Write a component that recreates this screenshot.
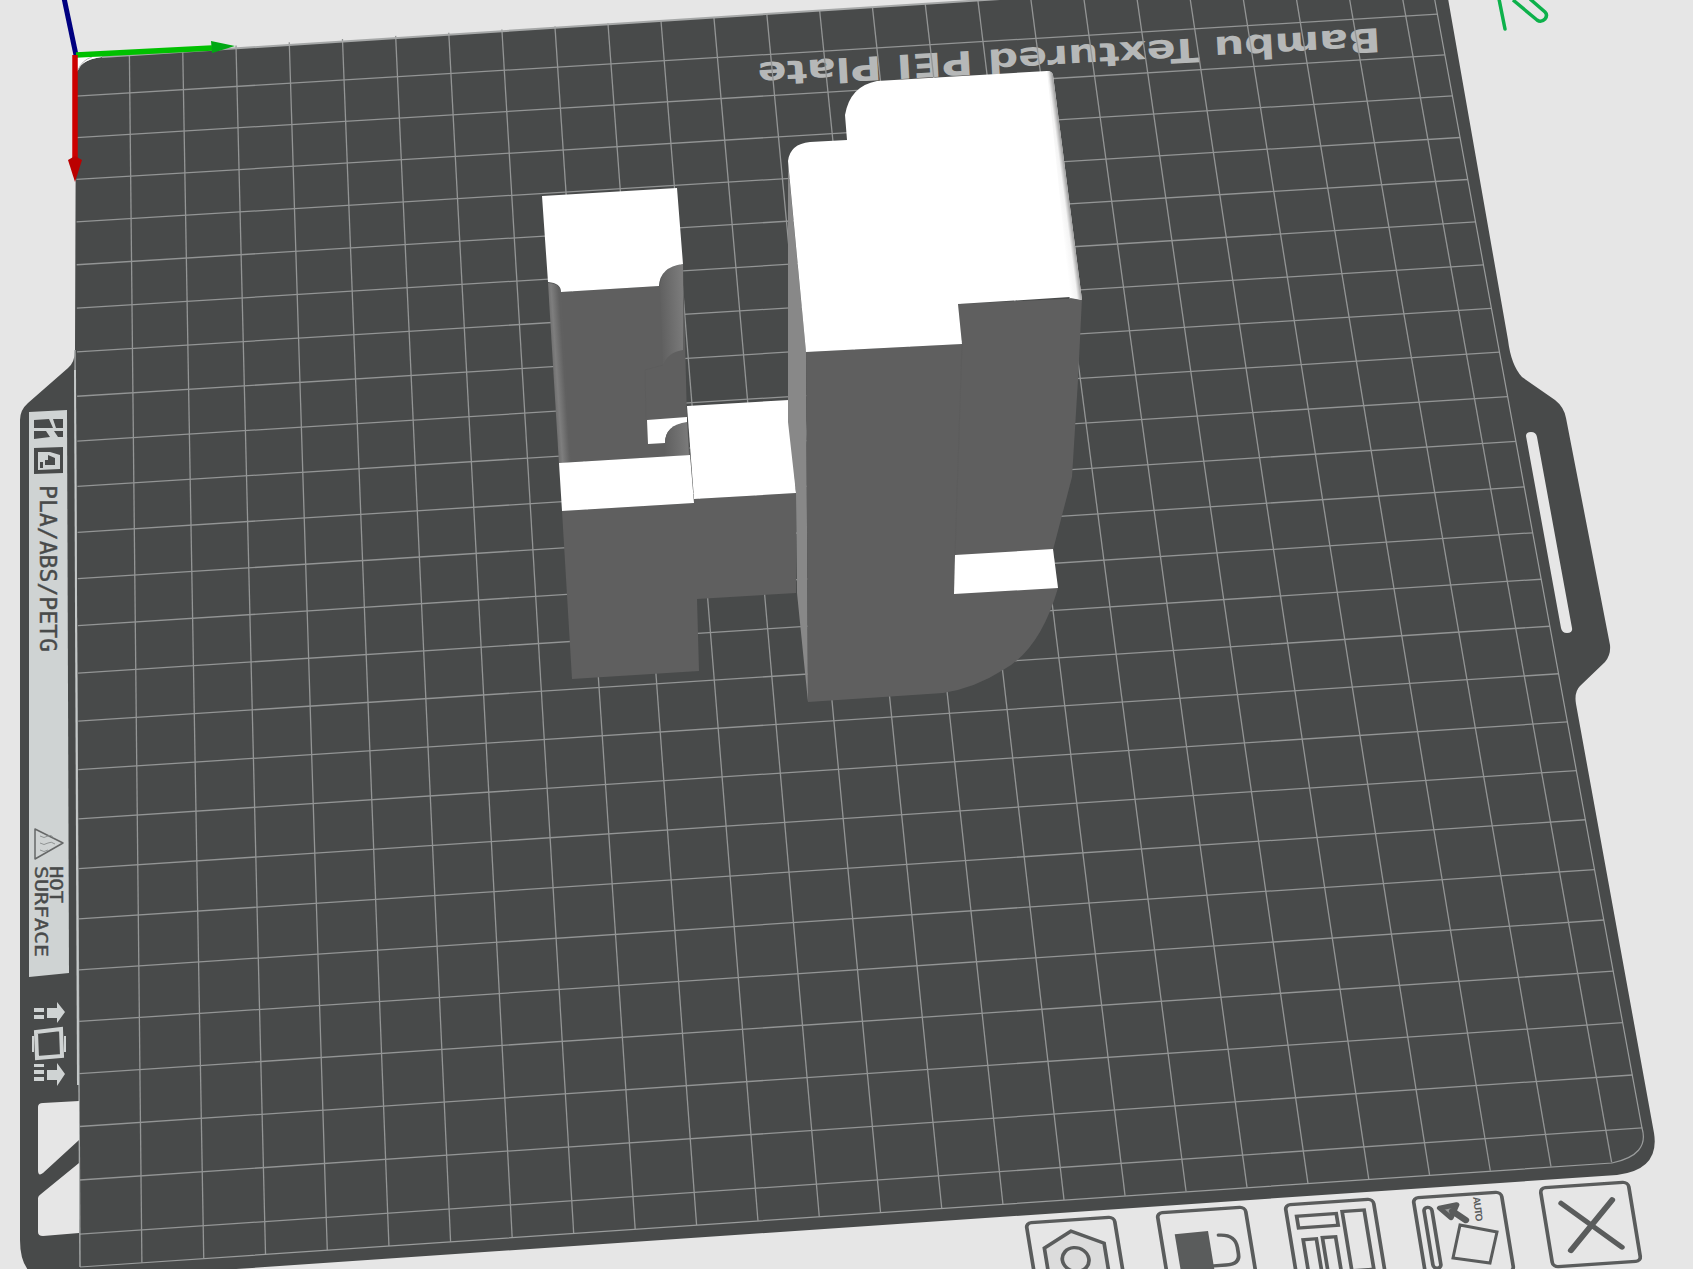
const BG = "#e6e6e6";
const PLATE = "#484a4a";
const LABEL = "#cfd3d3";
const ICON = "#5a5c5c";
const BODY = "#5f5f5f";
const SIDE = "#888888";

type Pt = [number, number];

// grid corners on screen, plate is 256mm and the grid runs every 10mm
const corners: Pt[] = [
  [76, 55],
  [1430, -26],
  [1648, 1160],
  [80, 1267],
];

function makeProjection([p0, p1, p2, p3]: Pt[]) {
  const dx1 = p1[0] - p2[0];
  const dx2 = p3[0] - p2[0];
  const sx = p0[0] - p1[0] + p2[0] - p3[0];
  const dy1 = p1[1] - p2[1];
  const dy2 = p3[1] - p2[1];
  const sy = p0[1] - p1[1] + p2[1] - p3[1];
  const det = dx1 * dy2 - dx2 * dy1;
  const g = (sx * dy2 - dx2 * sy) / det;
  const h = (dx1 * sy - sx * dy1) / det;
  const a = p1[0] - p0[0] + g * p1[0];
  const b = p3[0] - p0[0] + h * p3[0];
  const d = p1[1] - p0[1] + g * p1[1];
  const e = p3[1] - p0[1] + h * p3[1];
  return (u: number, v: number): Pt => {
    const w = g * u + h * v + 1;
    return [(a * u + b * v + p0[0]) / w, (d * u + e * v + p0[1]) / w];
  };
}

function GridLines() {
  const project = makeProjection(corners);
  const steps = Array.from({ length: 25 }, (_, i) => ((i + 1) * 10) / 256);
  return (
    <g stroke="#939595" strokeWidth="1.3">
      {steps.map((t) => {
        const a = project(t, 0);
        const b = project(t, 1);
        const c = project(0, t);
        const d = project(1, t);
        return (
          <g key={t}>
            <line x1={a[0]} y1={a[1]} x2={b[0]} y2={b[1]} />
            <line x1={c[0]} y1={c[1]} x2={d[0]} y2={d[1]} />
          </g>
        );
      })}
    </g>
  );
}

function Plate() {
  return (
    <g>
      <path
        d="M76 75 Q78 60 102 57 L1000 -1 L1443 -30 L1508 340 Q1511 365 1522 377 L1555 400 Q1564 407 1566 418 L1610 645 Q1611 655 1605 662 L1580 686 Q1574 692 1576 704 L1654 1133 Q1660 1170 1617 1175 L60 1281 Q20 1284 20 1240 L20 420 Q20 410 28 403 L68 368 Q75 362 75 350 Z"
        fill={PLATE}
      />
      <path d="M76 76 Q78 60 102 57 L76 57 Z" fill="#ffffff" />
      <path d="M78 70 Q82 60 92 57" fill="none" stroke="#b5b5b5" />
      <text
        transform="translate(1380 28) rotate(176.8)"
        x="0"
        y="0"
        fontFamily="'DejaVu Sans', sans-serif"
        fontSize="33"
        fontWeight="700"
        textLength="624"
        lengthAdjust="spacingAndGlyphs"
        fill="#b6b8b8"
      >
        Bambu Textured PEI Plate
      </text>
      <GridLines />
      {/* top edge, right border with its round corner, bottom and left */}
      <path
        d="M102 57 L1000 -1"
        fill="none"
        stroke="#a6a8a8"
        strokeWidth="2"
      />
      <path
        d="M1430 -26 L1642 1128 Q1650 1155 1612 1163 L80 1267"
        fill="none"
        stroke="#9a9c9c"
        strokeWidth="1.2"
      />
      <path d="M75 350 L80 1267" fill="none" stroke="#a4a7a7" strokeWidth="1.4" />
      <path d="M75 370 L78 1085" fill="none" stroke="#c4c8c8" strokeWidth="2" />
      {/* handle slot */}
      <path
        d="M1526 436 Q1526 432 1531 432 Q1536 432 1537 437 L1572 628 Q1573 633 1567 633 Q1562 633 1561 628 Z"
        fill={BG}
      />
    </g>
  );
}

function SideLabel() {
  return (
    <g>
      <path d="M29 412 L67 410 L69 973 L29 977 Z" fill={LABEL} />
      {/* Bambu mark */}
      <path
        d="M34 420 L49 419 L53 428 L34 428 Z M34 431 L46 431 L50 437 L34 439 Z M53 419 L63 419 L63 428 L56 428 Z M54 431 L63 431 L63 437 L58 437 Z"
        fill={PLATE}
      />
      <path
        d="M34 448 L63 447 L63 473 L34 474 Z M38 452 L38 470 L60 469 L60 455 L50 452 Z"
        fill={PLATE}
        fillRule="evenodd"
      />
      <path d="M48 455 L55 458 L55 465 L45 465 L45 460 L48 460 Z M40 462 L43 462 L43 468 L40 468 Z" fill={PLATE} />
      <text
        transform="translate(40 485) rotate(90)"
        fontFamily="'DejaVu Sans Mono', monospace"
        fontSize="23"
        textLength="167"
        lengthAdjust="spacingAndGlyphs"
        fill={PLATE}
        stroke={PLATE}
        strokeWidth="0.4"
      >
        PLA/ABS/PETG
      </text>
      {/* hot surface triangle */}
      <path d="M35 829 L63 843 L35 859 Z" fill="none" stroke="#666868" strokeWidth="1.5" strokeLinejoin="round" />
      <path
        d="M40 836 Q44 839 48 836 Q51 834 54 838 M40 843 Q44 846 48 843 Q51 841 55 844 M40 850 Q44 853 48 850"
        fill="none"
        stroke="#909494"
        strokeWidth="1"
      />
      <text
        transform="translate(50 866) rotate(90)"
        fontFamily="'DejaVu Sans Mono', monospace"
        fontSize="17"
        textLength="37"
        lengthAdjust="spacingAndGlyphs"
        fill={PLATE}
        stroke={PLATE}
        strokeWidth="0.4"
      >
        HOT
      </text>
      <text
        transform="translate(35 866) rotate(90)"
        fontFamily="'DejaVu Sans Mono', monospace"
        fontSize="17"
        textLength="91"
        lengthAdjust="spacingAndGlyphs"
        fill={PLATE}
        stroke={PLATE}
        strokeWidth="0.4"
      >
        SURFACE
      </text>
      {/* flip direction arrows */}
      <g fill={LABEL}>
        <path d="M34 1008 H44 V1012 H34 Z M34 1015 H44 V1019 H34 Z" />
        <path d="M47 1008 H57 V1002 L65 1012 L57 1023 V1018 H47 Z" />
        <path d="M34 1070 H44 V1074 H34 Z M34 1077 H44 V1081 H34 Z M34 1064 H44 V1067 H34 Z" />
        <path d="M47 1070 H57 V1063 L65 1074 L57 1086 V1080 H47 Z" />
      </g>
      <path d="M36 1032 L61 1029 L62 1056 L37 1058 Z" fill="none" stroke={LABEL} strokeWidth="4" />
      <path d="M33 1036 V1052 M65 1036 V1052" stroke={LABEL} strokeWidth="2" />
      {/* cut outs at the corner */}
      <path d="M38 1107 Q38 1103 43 1103 L79 1101 L79 1140 L43 1173 Q38 1177 38 1170 Z" fill={BG} />
      <path d="M79 1163 L79 1233 L43 1236 Q38 1236 38 1232 L38 1198 Q38 1196 41 1194 Z" fill={BG} />
    </g>
  );
}

function Axes() {
  return (
    <g>
      <path d="M76 55 L64 -2" stroke="#000080" strokeWidth="5" />
      <path d="M76 55 L212 48" stroke="#00c000" strokeWidth="5.5" />
      <path d="M211 41 L235 46 L212 53 Z" fill="#00a814" />
      <path d="M75 55 L75 160" stroke="#cc0000" strokeWidth="5.5" />
      <path d="M68 160 L75 156 L82 160 L75 182 Z" fill="#bb0000" />
      <path d="M1499 -1 L1505 29" stroke="#0db14b" strokeWidth="3.5" strokeLinecap="round" />
      <path
        d="M1513 0 L1537 20 Q1541 23 1545 19 Q1548 15 1545 12 L1530 -1"
        fill="none"
        stroke="#0db14b"
        strokeWidth="3.5"
      />
    </g>
  );
}

function Model() {
  return (
    <g>
      <defs>
        <linearGradient id="fillLeft" gradientUnits="userSpaceOnUse" x1="549" y1="370" x2="564" y2="369">
          <stop offset="0" stopColor="#5f5f5f" />
          <stop offset="0.5" stopColor="#7e7e7e" />
          <stop offset="1" stopColor="#606060" />
        </linearGradient>
        <linearGradient id="fillRight" gradientUnits="userSpaceOnUse" x1="660" y1="320" x2="684" y2="319">
          <stop offset="0" stopColor="#5f5f5f" />
          <stop offset="1" stopColor="#7c7c7c" />
        </linearGradient>
        <linearGradient id="fillSmall" gradientUnits="userSpaceOnUse" x1="665" y1="440" x2="688" y2="439">
          <stop offset="0" stopColor="#606060" />
          <stop offset="1" stopColor="#7a7a7a" />
        </linearGradient>
        <linearGradient id="edgeBig" gradientUnits="userSpaceOnUse" x1="1056" y1="186" x2="1069" y2="184.3">
          <stop offset="0" stopColor="#ffffff" />
          <stop offset="0.5" stopColor="#f4f4f4" />
          <stop offset="1" stopColor="#777777" />
        </linearGradient>
      </defs>

      {/* short column */}
      <path d="M561 292 L659 286 L683 264 L687 419 L690 455 L559 463 Z" fill={BODY} />
      <path d="M548 283 Q560 283 561 292 L571 462 L559 464 Z" fill="url(#fillLeft)" />
      <path d="M683 264 Q660 267 660 285 L663 365 Q668 352 683 350 Z" fill="url(#fillRight)" />
      <path d="M542 196 L677 188 L683 264 Q660 267 659 286 L561 292 Q561 283 548 282 Z" fill="#ffffff" />
      <path d="M647 420 L687 417 L687 423 Q665 425 665 443 L648 444 Z" fill="#ffffff" />
      <path d="M687 422 Q665 425 665 443 L665 457 L689 455 Z" fill="url(#fillSmall)" />
      <path d="M645 370 L663 365 M645 370 L646 419" stroke="#5a5a5a" strokeWidth="0.5" fill="none" />

      {/* bridge */}
      <path
        d="M562 511 L694 503 L694 499 L796 493 L796 593 L697 599 L699 671 L572 679 Z"
        fill={BODY}
      />
      <path d="M687 406 L789 400 L796 493 L694 499 Z" fill="#ffffff" />
      <path d="M559 463 L690 455 L694 503 L562 511 Z" fill="#ffffff" />

      {/* tall block */}
      <path d="M788 163 L806 352 L808 702 L797 593 L796 493 L788 422 Z" fill={SIDE} />
      <path
        d="M806 352 L962 344 L958 304 L1082 298 L1078 380 L1072 477 L1053 550 L1058 588 Q1040 650 1003 670 Q975 688 943 693 L808 702 Z"
        fill={BODY}
      />
      <path d="M962 344 L955 555" stroke="#5b5b5b" strokeWidth="0.5" />
      <path
        d="M788 161 Q790 144 810 142 L847 140 L845 115 Q850 86 877 81 L1047 71 Q1052 71 1053 75 L1082 300 L1070 297 L958 304 L962 344 L806 352 Z"
        fill="#ffffff"
      />
      <path d="M1047 71 Q1052 71 1053 75 L1082 300 L1070 298 Z" fill="url(#edgeBig)" />
      <path d="M955 555 L1053 549 L1058 588 L954 594 Z" fill="#ffffff" />
    </g>
  );
}

// shared tilt of the button row, one button is 100x100 in its own units
function Button({ x, y, children }: { x: number; y: number; children: React.ReactNode }) {
  return (
    <g transform={`matrix(0.88 -0.06 0.13 0.79 ${x} ${y})`} fill="none" stroke={ICON} strokeWidth="4.2">
      <rect x="0" y="0" width="100" height="100" rx="6" />
      {children}
    </g>
  );
}

function Buttons() {
  return (
    <g>
      <Button x={1026} y={1223}>
        <path d="M49 14 L84 32 L84 92 L49 110 L16 92 L16 33 Z" fill="#dcdcdc" />
        <circle cx="49" cy="50" r="15" />
      </Button>
      <Button x={1157} y={1213}>
        <path d="M16 28 L54 27 L54 110 L16 110 Z" fill={ICON} stroke="none" />
        <path d="M65 33 Q84 33 84 50 V58 Q84 71 68 71 H54" strokeLinecap="round" />
      </Button>
      <Button x={1285} y={1205}>
        <rect x="11" y="15" width="45" height="15" />
        <rect x="63" y="13" width="25" height="75" />
        <rect x="14" y="45" width="15" height="65" />
        <rect x="36" y="44" width="15" height="65" />
      </Button>
      <Button x={1413} y={1198}>
        <rect x="10" y="13" width="9" height="77" rx="4.5" />
        <path d="M28 15 L48 12 L39 28 Z" strokeWidth="6" strokeLinejoin="round" fill="#9a9c9c" />
        <path d="M42 20 L55 32" strokeWidth="8" strokeLinecap="round" />
      </Button>
      <path d="M1460 1225 L1497 1232 L1490 1263 L1453 1258 Z" fill="none" stroke={ICON} strokeWidth="3" />
      <text
        transform="translate(1473 1197) rotate(83)"
        fontFamily="'Liberation Sans', sans-serif"
        fontSize="10"
        fontWeight="700"
        textLength="25"
        fill={ICON}
      >
        AUTO
      </text>
      <Button x={1540} y={1188}>
        <path d="M21 21 L81 81 M79 21 L23 81" strokeWidth="6.5" strokeLinecap="round" />
      </Button>
    </g>
  );
}

export default function App() {
  return (
    <div className="h-[1269px] w-[1693px] overflow-hidden bg-[#e6e6e6]">
      <svg className="block" width="1693" height="1269" viewBox="0 0 1693 1269">
        <Plate />
        <SideLabel />
        <Model />
        <Axes />
        <Buttons />
      </svg>
    </div>
  );
}
